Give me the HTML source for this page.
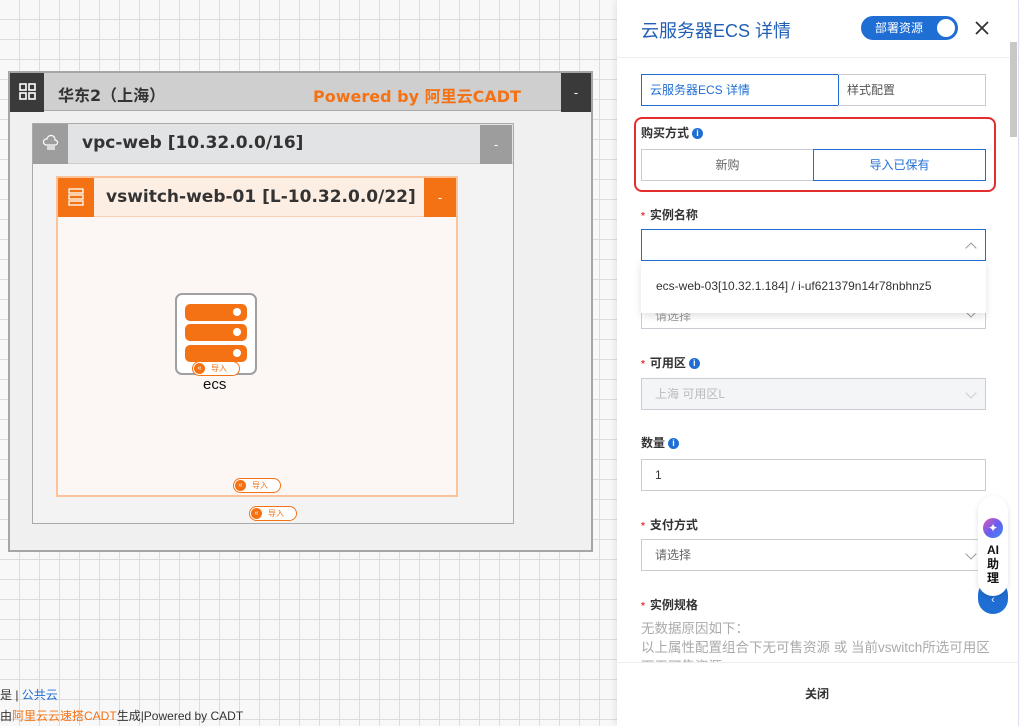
<!DOCTYPE html>
<html><head><meta charset="utf-8"><style>
*{box-sizing:border-box;margin:0;padding:0}
body{width:1025px;height:726px;overflow:hidden;position:relative;font-family:"Liberation Sans","Noto Sans CJK SC",sans-serif;background:#f8f8f8;
background-image:linear-gradient(#dcdcdc 1px,transparent 1px),linear-gradient(90deg,#dcdcdc 1px,transparent 1px);background-size:20px 20px;background-position:-1px -1px}
.a{position:absolute}
.hdr{font-weight:bold;color:#333;font-family:"DejaVu Sans","Noto Sans CJK SC",sans-serif}
.imp{position:absolute;height:15px;width:48px;border:1px solid #f47214;border-radius:8px;background:#fff;font-size:8px;color:#f47214;padding-left:18px;line-height:13px}
.imp:before{content:"«";position:absolute;left:1px;top:1px;width:11px;height:11px;border-radius:50%;background:#f47214;color:#fff;font-size:7px;line-height:11px;text-align:center}
.lbl{position:absolute;left:641px;font-size:12px;font-weight:bold;color:#333}
.req:before{content:"*";color:#e33;margin-right:5px;font-size:10px}
.inp{position:absolute;left:641px;width:345px;height:32px;border:1px solid #c9ccd2;background:#fff;font-size:12px;color:#333;padding-left:13px;line-height:30px}
.info{display:inline-block;width:11px;height:11px;border-radius:50%;background:#1f6ed4;color:#fff;font-size:9px;line-height:11px;text-align:center;vertical-align:1px;margin-left:3px;font-weight:bold}
.chev{position:absolute;right:10px;top:10px;width:8px;height:8px;border-right:1px solid #999;border-bottom:1px solid #999;transform:rotate(45deg)}
</style></head><body>
<!-- region -->
<div class="a" style="left:8px;top:71px;width:585px;height:481px;border:2px solid #a6a6a6;background:#f0f0f0"></div>
<div class="a" style="left:10px;top:73px;width:581px;height:38px;background:#cfcfcf;border-bottom:1px solid #aaa"></div>
<div class="a" style="left:10px;top:73px;width:34px;height:39px;background:#3a3a3a"></div>
<svg class="a" style="left:19px;top:83px" width="18" height="18"><g fill="none" stroke="#fff" stroke-width="1.6"><rect x="1" y="1" width="6" height="6"/><rect x="10" y="1" width="6" height="6"/><rect x="1" y="10" width="6" height="6"/><rect x="10" y="10" width="6" height="6"/></g></svg>
<div class="a hdr" style="left:58px;top:82px;font-size:16px">华东2（上海）</div>
<div class="a hdr" style="left:313px;top:83px;font-size:16px;color:#f47214">Powered by 阿里云CADT</div>
<div class="a" style="left:561px;top:73px;width:30px;height:39px;background:#3a3a3a;color:#fff;text-align:center;line-height:39px;font-size:13px">-</div>
<!-- vpc -->
<div class="a" style="left:32px;top:123px;width:482px;height:401px;border:1px solid #aaa;background:#f3f3f3"></div>
<div class="a" style="left:33px;top:124px;width:480px;height:40px;background:#e2e3e5;border-bottom:1px solid #ccc"></div>
<div class="a" style="left:33px;top:124px;width:35px;height:40px;background:#9d9d9d"></div>
<svg class="a" style="left:42px;top:134px" width="18" height="18"><g fill="none" stroke="#fff" stroke-width="1.2"><path d="M4 11a3 3 0 0 1 1-6a4 4 0 0 1 8 1a2.5 2.5 0 0 1 0 5z"/><path d="M5 13h8M5 15h8"/></g></svg>
<div class="a hdr" style="left:82px;top:133px;font-size:17px">vpc-web [10.32.0.0/16]</div>
<div class="a" style="left:480px;top:125px;width:32px;height:39px;background:#9d9d9d;color:#fff;text-align:center;line-height:39px;font-size:13px">-</div>
<!-- vswitch -->
<div class="a" style="left:56px;top:176px;width:402px;height:321px;border:2px solid #fcc39a;background:#fcf7f4"></div>
<div class="a" style="left:58px;top:178px;width:398px;height:39px;background:#fdeee3;border-bottom:1px solid #f5d2b8"></div>
<div class="a" style="left:58px;top:178px;width:36px;height:39px;background:#f47214"></div>
<svg class="a" style="left:67px;top:188px" width="18" height="18"><g fill="none" stroke="#fff" stroke-width="1.3"><rect x="2" y="1" width="14" height="4"/><rect x="2" y="7" width="14" height="4"/><rect x="2" y="13" width="14" height="4"/></g></svg>
<div class="a hdr" style="left:106px;top:187px;font-size:17px">vswitch-web-01 [L-10.32.0.0/22]</div>
<div class="a" style="left:424px;top:178px;width:32px;height:39px;background:#f47214;color:#fff;text-align:center;line-height:39px;font-size:13px">-</div>
<!-- ecs -->
<div class="a" style="left:175px;top:293px;width:82px;height:82px;border:2px solid #a0a0a0;border-radius:7px;background:#fff"></div>
<div class="a" style="left:185px;top:304px;width:62px;height:17px;background:#f47214;border-radius:5px"><span class="a" style="right:6px;top:4px;width:8px;height:8px;border-radius:50%;background:#fff"></span></div>
<div class="a" style="left:185px;top:324px;width:62px;height:17px;background:#f47214;border-radius:5px"><span class="a" style="right:6px;top:4px;width:8px;height:8px;border-radius:50%;background:#fff"></span></div>
<div class="a" style="left:185px;top:345px;width:62px;height:17px;background:#f47214;border-radius:5px"><span class="a" style="right:6px;top:4px;width:8px;height:8px;border-radius:50%;background:#fff"></span></div>
<div class="imp" style="left:192px;top:361px">导入</div>
<div class="a" style="left:203px;top:376px;font-size:15px;color:#111">ecs</div>
<div class="imp" style="left:233px;top:478px">导入</div>
<div class="imp" style="left:249px;top:506px">导入</div>
<div class="a" style="left:0;top:686px;font-size:12px;color:#333">是 | <span style="color:#1f6ed4">公共云</span></div>
<div class="a" style="left:0;top:707px;font-size:12px;color:#333;white-space:nowrap">由<span style="color:#f47214">阿里云云速搭CADT</span>生成|Powered by CADT</div>
<!-- right strip -->
<div class="a" style="left:1018px;top:0;width:7px;height:726px;background:#fff;border-left:1px solid #dde3f3"></div>
<!-- panel -->
<div class="a" style="left:617px;top:0;width:401px;height:726px;background:#fff;box-shadow:-2px 0 6px rgba(0,0,0,.08)"></div>
<div class="a" style="left:617px;top:57px;width:401px;height:1px;background:#eee"></div>
<div class="a" style="left:641px;top:17px;font-size:18px;color:#1f5fb5">云服务器ECS 详情</div>
<div class="a" style="left:861px;top:16px;width:97px;height:24px;border-radius:12px;background:#1f6ed4;color:#fff;font-size:12px;line-height:24px;padding-left:14px">部署资源<span class="a" style="right:3px;top:3px;width:18px;height:18px;border-radius:50%;background:#fff"></span></div>
<svg class="a" style="left:974px;top:20px" width="16" height="16"><path d="M2 2L14 14M14 2L2 14" stroke="#333" stroke-width="1.8"/></svg>
<div class="a" style="left:1010px;top:42px;width:7px;height:95px;background:#c8c8c8"></div>
<div class="a" style="left:641px;top:74px;width:198px;height:32px;border:1px solid #1f6ed4;color:#1f6ed4;font-size:12px;line-height:30px;padding-left:8px;background:#fff">云服务器ECS 详情</div>
<div class="a" style="left:838px;top:74px;width:148px;height:32px;border:1px solid #c9ccd2;border-left:none;color:#555;font-size:12px;line-height:30px;padding-left:9px">样式配置</div>
<div class="a" style="left:634px;top:117px;width:362px;height:75px;border:2px solid #e52d2d;border-radius:8px"></div>
<div class="lbl" style="top:124px">购买方式<span class="info">i</span></div>
<div class="a" style="left:641px;top:149px;width:173px;height:32px;border:1px solid #c9ccd2;font-size:12px;color:#666;text-align:center;line-height:30px">新购</div>
<div class="a" style="left:813px;top:149px;width:173px;height:32px;border:1px solid #1f6ed4;font-size:12px;color:#1f6ed4;text-align:center;line-height:30px">导入已保有</div>
<div class="lbl req" style="top:206px">实例名称</div>
<div class="inp" style="top:229px;border-color:#1f6ed4"><span class="chev" style="transform:rotate(225deg);top:14px"></span></div>
<div class="inp" style="top:297px;color:#999;line-height:36px;height:32px">请选择<span class="chev"></span></div>
<div class="a" style="left:641px;top:261px;width:345px;height:52px;background:#fff;box-shadow:0 3px 8px rgba(0,0,0,.12);font-size:12px;color:#333;padding:18px 0 0 15px">ecs-web-03[10.32.1.184] / i-uf621379n14r78nbhnz5</div>
<div class="lbl req" style="top:354px">可用区<span class="info">i</span></div>
<div class="inp" style="top:378px;background:#f4f5f7;color:#bbb">上海 可用区L<span class="chev" style="border-color:#ccc"></span></div>
<div class="lbl" style="top:434px">数量<span class="info">i</span></div>
<div class="inp" style="top:459px">1</div>
<div class="lbl req" style="top:516px">支付方式</div>
<div class="inp" style="top:539px;color:#666">请选择<span class="chev"></span></div>
<div class="lbl req" style="top:596px">实例规格</div>
<div class="a" style="left:641px;top:619px;font-size:13.5px;color:#aaa;line-height:19px;white-space:nowrap">无数据原因如下：<br>以上属性配置组合下无可售资源 或 当前vswitch所选可用区<br>下无可售资源</div>
<div class="a" style="left:617px;top:662px;width:401px;height:64px;background:#fff;border-top:1px solid #eee"></div>
<div class="a" style="left:805px;top:685px;font-size:12px;font-weight:bold;color:#333">关闭</div>
<!-- AI -->
<div class="a" style="left:978px;top:580px;width:30px;height:34px;border-radius:15px;background:#1f6ed4;color:#fff;font-size:11px;text-align:center;line-height:40px">‹</div>
<div class="a" style="left:978px;top:496px;width:30px;height:100px;border-radius:15px;background:#fff;box-shadow:0 2px 6px rgba(0,0,0,.12)"></div>
<div class="a" style="left:983px;top:518px;width:20px;height:20px;border-radius:50%;background:linear-gradient(135deg,#e55ab0,#6a5cf0,#3a8cf0);color:#fff;font-size:12px;text-align:center;line-height:20px">✦</div>
<div class="a" style="left:984px;top:543px;width:18px;font-size:12px;font-weight:bold;color:#111;text-align:center;line-height:14px">AI<br>助<br>理</div>
</body></html>
